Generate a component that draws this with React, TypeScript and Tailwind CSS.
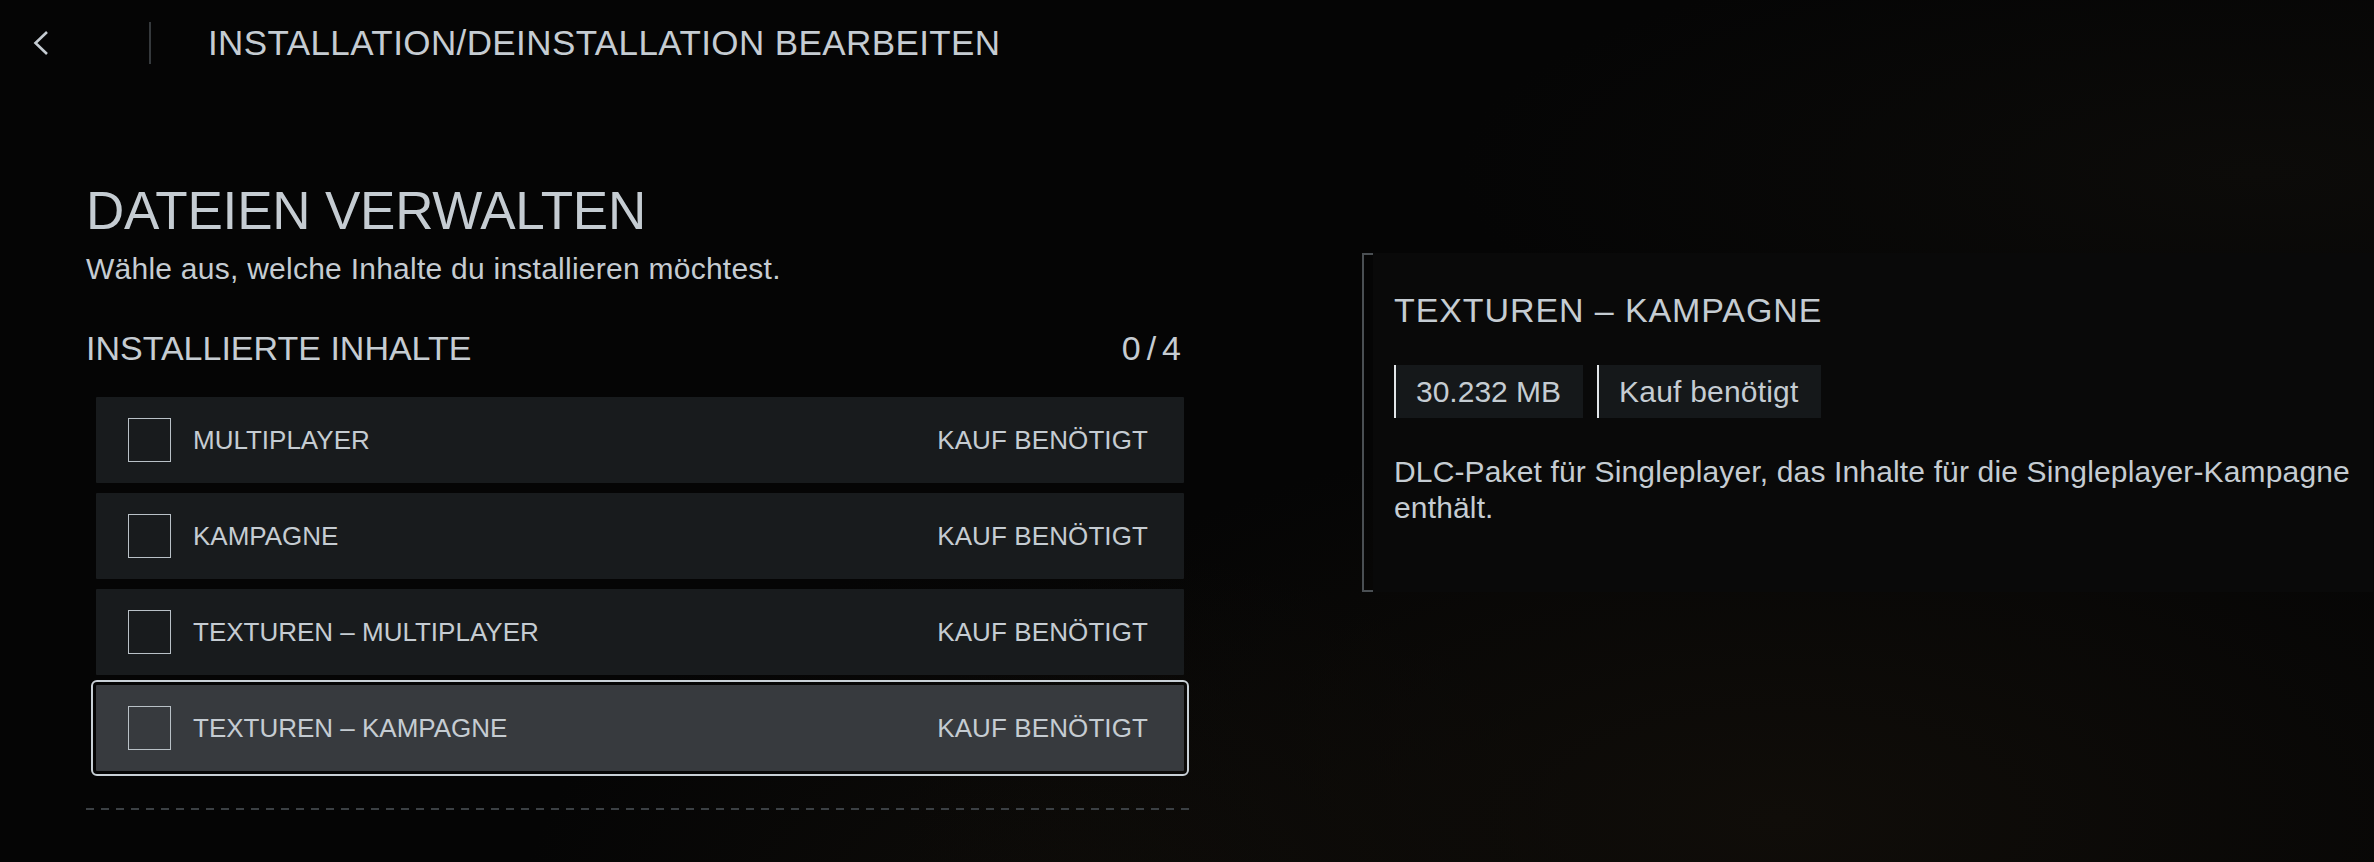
import React, { useState } from 'react';

type Item = { id: string; label: string; status: string };

const items: Item[] = [
  { id: 'mp', label: 'MULTIPLAYER', status: 'KAUF BENÖTIGT' },
  { id: 'sp', label: 'KAMPAGNE', status: 'KAUF BENÖTIGT' },
  { id: 'tex-mp', label: 'TEXTUREN – MULTIPLAYER', status: 'KAUF BENÖTIGT' },
  { id: 'tex-sp', label: 'TEXTUREN – KAMPAGNE', status: 'KAUF BENÖTIGT' },
];

export default function App() {
  const [focused, setFocused] = useState('tex-sp');
  const [checked, setChecked] = useState<string[]>([]);

  const toggle = (id: string) =>
    setChecked((ids) => (ids.includes(id) ? ids.filter((x) => x !== id) : [...ids, id]));

  return (
    <div className="relative h-[862px] w-full overflow-hidden bg-[#050505] bg-[radial-gradient(ellipse_at_75%_95%,#100d09_0%,transparent_35%),radial-gradient(ellipse_at_45%_110%,#0e0c09_0%,transparent_30%),radial-gradient(ellipse_at_95%_20%,#0c0b09_0%,transparent_25%)] font-[family-name:'Liberation_Sans',Arial,sans-serif] text-[#c5ccd2]">
      <header className="flex h-[85px] items-center">
        <button type="button" aria-label="Zurück" className="ml-[32px] flex h-[26px] w-[17px] items-center">
          <svg width="17" height="26" viewBox="0 0 17 26" fill="none">
            <path d="M15 2 L3.5 13 L15 24" stroke="#c5ccd2" strokeWidth="2.6" />
          </svg>
        </button>
        <div className="ml-[100px] h-[42px] w-[2px] bg-[#35393c]" />
        <h1 className="ml-[57px] text-[35px] leading-[35px] tracking-[0.4px]">INSTALLATION/DEINSTALLATION BEARBEITEN</h1>
      </header>

      <main className="flex items-start">
        <section className="w-[1196px] shrink-0 pl-[86px] pt-[99px]">
          <h2 className="text-[53px] leading-[53px] tracking-[-0.2px]">DATEIEN VERWALTEN</h2>
          <p className="mt-[14px] text-[30px] leading-[36px] tracking-[0.25px]">Wähle aus, welche Inhalte du installieren möchtest.</p>

          <div className="mt-[44px] flex items-center justify-between pr-[15px]">
            <h3 className="text-[34px] leading-[34px]">INSTALLIERTE INHALTE</h3>
            <span className="mr-[-6px] text-[34px] leading-[34px] tracking-[6px]">0/4</span>
          </div>

          <ul className="mt-[32px] ml-[10px] mr-[12px] flex flex-col gap-[10px]">
            {items.map((item) => {
              const active = item.id === focused;
              const on = checked.includes(item.id);
              return (
                <li
                  key={item.id}
                  onMouseEnter={() => setFocused(item.id)}
                  onClick={() => toggle(item.id)}
                  className={`flex h-[86px] cursor-pointer items-center rounded-[1px] pl-[32px] pr-[36px] ${
                    active ? 'bg-[#373a3e] outline-2 outline-offset-[3px] outline-[#c8d0d6]' : 'bg-[#181b1d]'
                  }`}
                >
                  <span className={`h-[44px] w-[43px] shrink-0 border border-[#b9c1c7] ${on ? 'bg-[#c5ccd2]' : ''}`} />
                  <span className="ml-[22px] text-[26px] leading-[26px]">{item.label}</span>
                  <span className="ml-auto text-[26px] leading-[26px] tracking-[0.1px]">{item.status}</span>
                </li>
              );
            })}
          </ul>

          <div className="mt-[37px] h-[2px] bg-[repeating-linear-gradient(to_right,#3b4044_0px,#3b4044_8px,transparent_8px,transparent_15px)]" />
        </section>

        <aside className="ml-[166px] mt-[168px] flex">
          <div className="flex w-[11px] shrink-0 flex-col">
            <div className="h-[2px] w-[11px] bg-[#4a4f53]" />
            <div className="w-[2px] flex-1 bg-[#4a4f53]" />
            <div className="h-[2px] w-[11px] bg-[#4a4f53]" />
          </div>
          <div className="w-[1000px] bg-[#090909] pb-[66px] pl-[21px] pt-[40px]">
            <h3 className="text-[34px] leading-[34px] tracking-[0.9px]">TEXTUREN – KAMPAGNE</h3>
            <div className="mt-[38px] flex gap-[14px]">
              <span className="flex h-[53px] items-center border-l-2 border-[#e2e6e9] bg-[#15181a] pl-[20px] pr-[22px] text-[30px]">30.232 MB</span>
              <span className="flex h-[53px] items-center border-l-2 border-[#e2e6e9] bg-[#15181a] pl-[20px] pr-[22px] text-[30px] tracking-[0.2px]">Kauf benötigt</span>
            </div>
            <p className="mt-[36px] w-[980px] text-[30px] leading-[36px] tracking-[0.15px]">
              DLC-Paket für Singleplayer, das Inhalte für die Singleplayer-Kampagne enthält.
            </p>
          </div>
        </aside>
      </main>
    </div>
  );
}
